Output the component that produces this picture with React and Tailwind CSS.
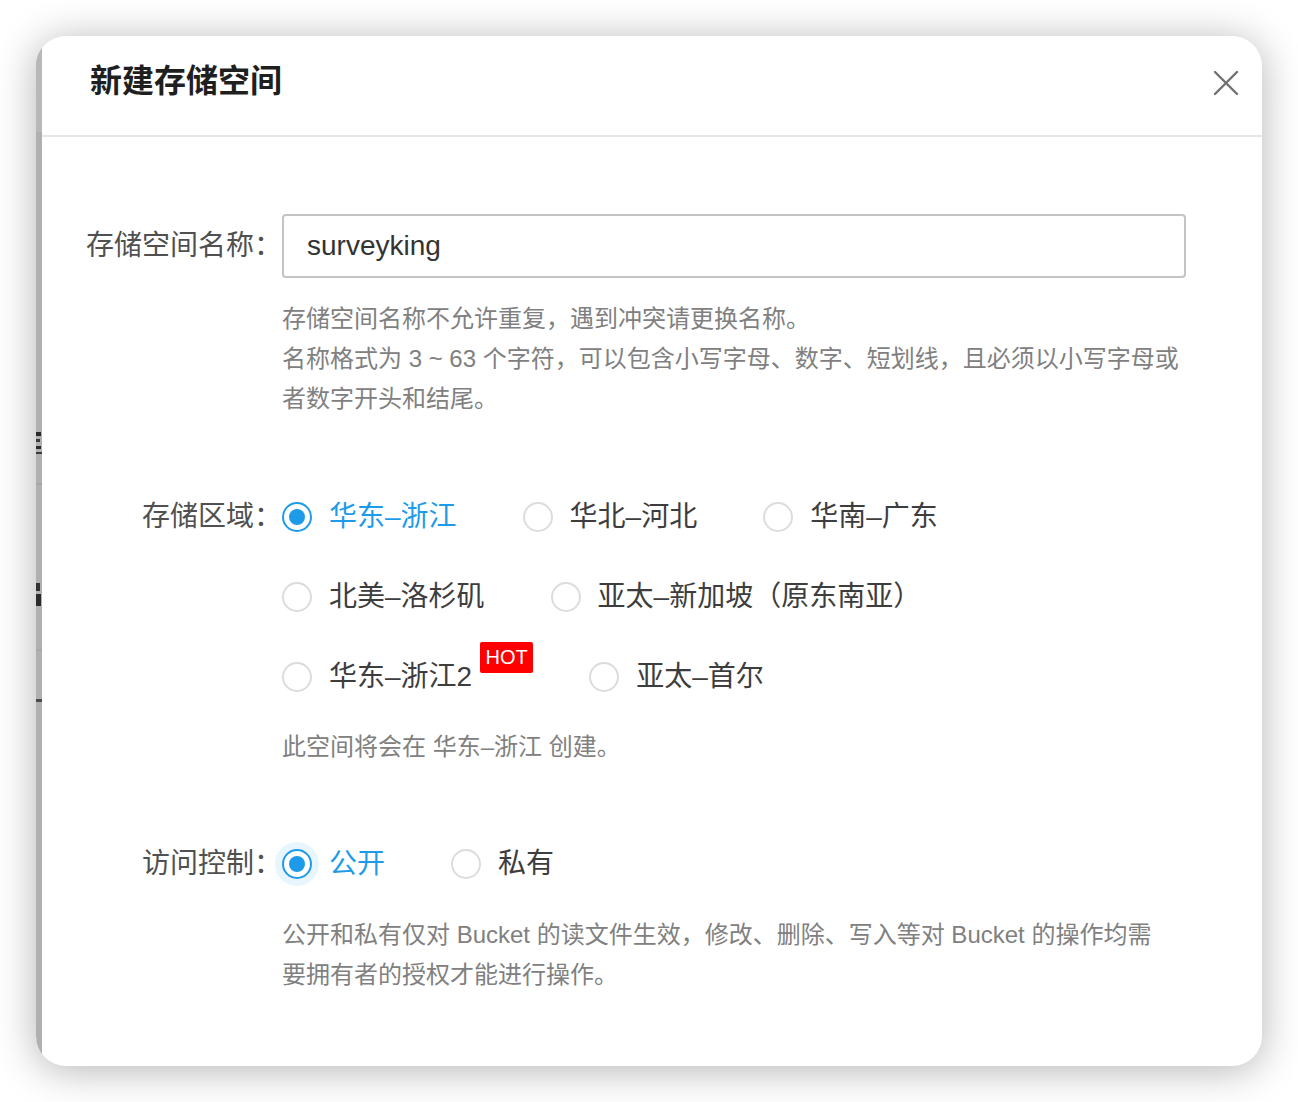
import React, { useState } from "react";

const regions = [
  { value: "cn-east-1", label: "华东–浙江" },
  { value: "cn-north-1", label: "华北–河北" },
  { value: "cn-south-1", label: "华南–广东" },
  { value: "us-west-1", label: "北美–洛杉矶" },
  { value: "ap-southeast-1", label: "亚太–新加坡（原东南亚）" },
  { value: "cn-east-2", label: "华东–浙江2", hot: true },
  { value: "ap-northeast-1", label: "亚太–首尔" },
];

const Radio = ({ checked, focused, label, onChange, hot }) => (
  <label
    className={`flex h-[80px] cursor-pointer items-center ${hot ? "mr-[56px]" : "mr-[66px]"}`}
    onClick={onChange}
  >
    <span
      className={`flex h-[30px] w-[30px] shrink-0 items-center justify-center rounded-full border-2 bg-white ${
        checked ? "border-[#1e9be8]" : "border-[#dcdcdc]"
      } ${focused ? "shadow-[0_0_0_7px_#e9f5fd]" : ""}`}
    >
      {checked && <span className="h-[16px] w-[16px] rounded-full bg-[#1e9be8]" />}
    </span>
    <span
      className={`ml-[17px] whitespace-nowrap text-[28px] ${
        checked ? "text-[#1e9be8]" : "text-[#3d3d3d]"
      }`}
    >
      {label}
    </span>
    {hot && (
      <span className="ml-[8px] mb-[40px] flex h-[31px] w-[53px] items-center justify-center rounded-[2px] bg-[#ff0000] text-[20px] leading-none text-white">
        HOT
      </span>
    )}
  </label>
);

const FormRow = ({ label, labelHeight, children, className = "" }) => (
  <div className={`flex ${className}`}>
    <div
      className={`flex w-[240px] shrink-0 items-center justify-end text-[28px] text-[#505050] ${labelHeight}`}
    >
      {label}
    </div>
    <div className="w-[904px]">{children}</div>
  </div>
);

// sliver of the page behind the dimmed overlay
const BackdropEdge = () => (
  <div className="flex w-[6px] shrink-0 flex-col bg-[#b0b0b0]">
    <div className="h-[96px] bg-[#b8b8b8]" />
    <div className="h-[300px]" />
    <div className="flex h-[22px] flex-col justify-between">
      <div className="h-[4px] w-[5px] bg-[#2a2a2a]" />
      <div className="h-[3px] w-[4px] bg-[#3a3a3a]" />
      <div className="h-[3px] w-[5px] bg-[#2a2a2a]" />
      <div className="h-[2px] w-[6px] bg-[#3a3a3a]" />
    </div>
    <div className="h-[29px]" />
    <div className="h-[2px] bg-[#a5a5a5]" />
    <div className="h-[98px]" />
    <div className="flex h-[26px] flex-col gap-[3px]">
      <div className="h-[8px] w-[4px] bg-[#333]" />
      <div className="h-[12px] w-[5px] bg-[#2a2a2a]" />
    </div>
    <div className="h-[40px]" />
    <div className="h-[2px] bg-[#a8a8a8]" />
    <div className="h-[48px]" />
    <div className="h-[3px] bg-[#4a4a4a]" />
  </div>
);

export default function App() {
  const [name, setName] = useState("surveyking");
  const [region, setRegion] = useState("cn-east-1");
  const [access, setAccess] = useState("public");

  const regionLabel = regions.find((r) => r.value === region)?.label;

  return (
    <div className="min-h-[1102px] bg-white p-[36px] font-['Liberation_Sans','Noto_Sans_CJK_SC',sans-serif]">
      <div className="flex h-[1030px] w-[1226px] overflow-hidden rounded-[30px] bg-white shadow-[0_4px_40px_rgba(0,0,0,0.3)]">
        <BackdropEdge />

        <div className="flex flex-1 flex-col">
          <div className="flex h-[101px] shrink-0 items-center justify-between border-b-2 border-[#e6e6e6] pb-[10px] pl-[48px] pr-[16px]">
            <h2 className="text-[32px] font-bold text-[#1f1f1f]">新建存储空间</h2>
            <button className="mt-[5px] flex h-[40px] w-[40px] items-center justify-center text-[#707070]">
              <svg width="26" height="26" viewBox="0 0 26 26" fill="none">
                <path
                  d="M2 2 L24 24 M24 2 L2 24"
                  stroke="currentColor"
                  strokeWidth="2.4"
                  strokeLinecap="round"
                />
              </svg>
            </button>
          </div>

          <div className="pt-[77px]">
            <FormRow label="存储空间名称：" labelHeight="h-[64px]">
              <input
                value={name}
                onChange={(e) => setName(e.target.value)}
                className="h-[64px] w-full rounded-[4px] border-2 border-[#c4c4c4] px-[23px] text-[28px] text-[#333] outline-none"
              />
              <p className="mt-[21px] text-[24px] leading-[40px] text-[#808080]">
                存储空间名称不允许重复，遇到冲突请更换名称。
                <br />
                名称格式为 3 ~ 63 个字符，可以包含小写字母、数字、短划线，且必须以小写字母或者数字开头和结尾。
              </p>
            </FormRow>

            <FormRow label="存储区域：" labelHeight="h-[80px] self-start" className="mt-[58px]">
              <div className="flex flex-wrap">
                {regions.map((r) => (
                  <Radio
                    key={r.value}
                    label={r.label}
                    hot={r.hot}
                    checked={region === r.value}
                    onChange={() => setRegion(r.value)}
                  />
                ))}
              </div>
              <p className="mt-[10px] text-[24px] leading-[40px] text-[#808080]">
                此空间将会在 {regionLabel} 创建。
              </p>
            </FormRow>

            <FormRow label="访问控制：" labelHeight="h-[80px] self-start" className="mt-[57px]">
              <div className="flex">
                <Radio
                  label="公开"
                  checked={access === "public"}
                  focused={access === "public"}
                  onChange={() => setAccess("public")}
                />
                <Radio
                  label="私有"
                  checked={access === "private"}
                  focused={access === "private"}
                  onChange={() => setAccess("private")}
                />
              </div>
              <p className="mt-[11px] w-[890px] text-[24px] leading-[40px] text-[#808080]">
                公开和私有仅对 Bucket 的读文件生效，修改、删除、写入等对 Bucket 的操作均需要拥有者的授权才能进行操作。
              </p>
            </FormRow>
          </div>
        </div>
      </div>
    </div>
  );
}
